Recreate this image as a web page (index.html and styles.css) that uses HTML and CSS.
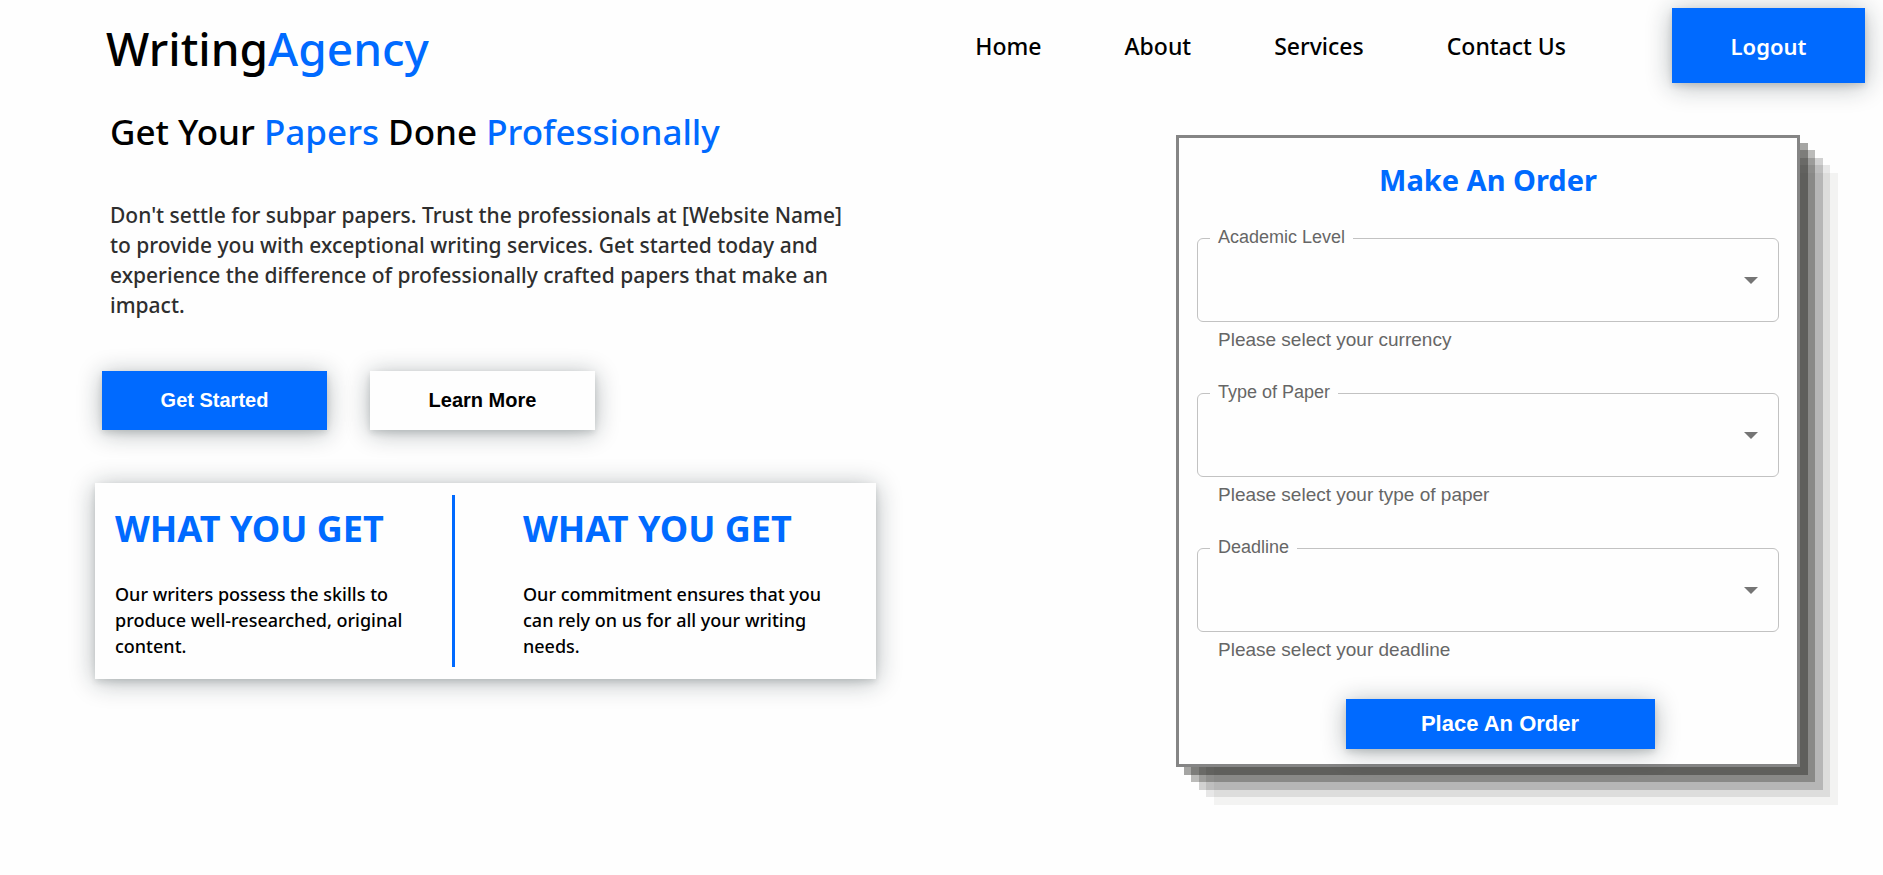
FILE: index.html
```html
<!DOCTYPE html>
<html lang="en">
<head>
<meta charset="utf-8">
<title>WritingAgency</title>
<link rel="stylesheet" href="styles.css">
</head>
<body>
<header class="header">
  <div class="logo">Writing<span class="accent">Agency</span></div>
  <nav class="nav">
    <a href="#home">Home</a>
    <a href="#about">About</a>
    <a href="#services">Services</a>
    <a href="#contact">Contact Us</a>
  </nav>
  <button class="btn btn-logout" type="button">Logout</button>
</header>
<main class="main">
  <section class="hero">
    <h1 class="hero-title">Get Your <span class="accent">Papers</span> Done <span class="accent">Professionally</span></h1>
    <p class="hero-text">Don't settle for subpar papers. Trust the professionals at [Website Name] to provide you with exceptional writing services. Get started today and experience the difference of professionally crafted papers that make an impact.</p>
    <div class="actions">
      <button class="btn btn-action" type="button">Get Started</button>
      <button class="btn btn-action btn-light" type="button">Learn More</button>
    </div>
    <div class="benefits">
      <article class="benefit">
        <h2>WHAT YOU GET</h2>
        <p>Our writers possess the skills to produce well-researched, original content.</p>
      </article>
      <article class="benefit">
        <h2>WHAT YOU GET</h2>
        <p>Our commitment ensures that you can rely on us for all your writing needs.</p>
      </article>
    </div>
  </section>
  <form class="order">
    <h2 class="order-title">Make An Order</h2>
    <div class="field">
      <label for="level">Academic Level</label>
      <div class="control">
        <select id="level" aria-describedby="level-help"><option></option></select>
        <svg viewBox="0 0 14 7" aria-hidden="true"><path d="M0 0h14L7 7z"/></svg>
      </div>
      <p id="level-help">Please select your currency</p>
    </div>
    <div class="field">
      <label for="type">Type of Paper</label>
      <div class="control">
        <select id="type" aria-describedby="type-help"><option></option></select>
        <svg viewBox="0 0 14 7" aria-hidden="true"><path d="M0 0h14L7 7z"/></svg>
      </div>
      <p id="type-help">Please select your type of paper</p>
    </div>
    <div class="field">
      <label for="deadline">Deadline</label>
      <div class="control">
        <select id="deadline" aria-describedby="deadline-help"><option></option></select>
        <svg viewBox="0 0 14 7" aria-hidden="true"><path d="M0 0h14L7 7z"/></svg>
      </div>
      <p id="deadline-help">Please select your deadline</p>
    </div>
    <div class="submit">
      <button class="btn btn-order" type="button">Place An Order</button>
    </div>
  </form>
</main>
</body>
</html>
```
FILE: styles.css
```css
:root {
  --blue: #006aff;
  --raised: 0 3px 6px rgba(14, 30, 37, 0.12), 0 3px 24px rgba(14, 30, 37, 0.32);
}

* {
  box-sizing: border-box;
}

body {
  margin: 0;
  background: #fefefe;
  color: #000;
  font-family: "Noto Sans", "Open Sans", sans-serif;
  font-weight: 500;
}

h1,
h2,
p {
  margin: 0;
}

.accent {
  color: var(--blue);
}

.btn {
  border: 0;
  background: var(--blue);
  color: #fff;
  box-shadow: var(--raised);
  font-family: "Liberation Sans", Arial, sans-serif;
  font-weight: 700;
  cursor: pointer;
}

.header {
  display: flex;
  align-items: center;
  padding: 8px 18px 0 106px;
}

.logo {
  margin-right: auto;
  padding-top: 5px;
  font-size: 46px;
  line-height: 70px;
}

.nav {
  display: flex;
  gap: 83px;
  margin-right: 106px;
}

.nav a {
  color: #000;
  font-size: 23px;
  text-decoration: none;
}

.btn-logout {
  width: 193px;
  height: 75px;
  font-family: "Noto Sans", "Open Sans", sans-serif;
  font-size: 22px;
  font-weight: 600;
}

.main {
  display: flex;
  justify-content: space-between;
  align-items: flex-start;
  gap: 48px;
  padding: 0 83px 48px 95px;
}

.hero {
  flex: 0 1 781px;
}

.hero-title {
  margin: 21px 0 0 15px;
  font-size: 35px;
  font-weight: 500;
  line-height: 56px;
}

.hero-text {
  margin: 40px 24px 0 15px;
  color: #2e2e2e;
  font-size: 21px;
  line-height: 30px;
}

.actions {
  display: flex;
  gap: 43px;
  margin: 51px 0 53px 7px;
}

.btn-action {
  width: 225px;
  height: 59px;
  font-size: 20px;
}

.btn-light {
  background: #fefefe;
  color: #000;
}

.benefits {
  display: grid;
  grid-template-columns: 360px 1fr;
  padding: 12px 0;
  background: #fefefe;
  box-shadow: var(--raised);
}

.benefit {
  padding: 10px 32px 8px 20px;
}

.benefit:first-child {
  border-right: 3px solid var(--blue);
}

.benefit + .benefit {
  padding-left: 68px;
}

.benefit h2 {
  color: var(--blue);
  font-size: 36px;
  font-weight: 700;
  line-height: 48px;
}

.benefit p {
  margin-top: 28px;
  font-size: 18px;
  line-height: 26px;
}

.order {
  flex: 0 1 624px;
  margin-top: 52px;
  padding: 18px 18px 15px;
  border: 3px solid #858585;
  background: #fefefe;
  box-shadow:
    8px 8px rgba(32, 32, 28, 0.4),
    15px 15px rgba(32, 32, 28, 0.3),
    23px 23px rgba(32, 32, 28, 0.2),
    30px 30px rgba(32, 32, 28, 0.1),
    38px 38px rgba(32, 32, 28, 0.05);
}

.order-title {
  margin-bottom: 34px;
  color: var(--blue);
  font-size: 29px;
  font-weight: 700;
  line-height: 48px;
  text-align: center;
}

.field {
  position: relative;
  color: #666;
  font-family: "Liberation Sans", Arial, sans-serif;
  font-weight: 400;
}

.field + .field {
  margin-top: 39px;
}

.field label {
  position: absolute;
  top: -12px;
  left: 13px;
  padding: 0 8px;
  background: #fefefe;
  font-size: 18px;
  line-height: 22px;
}

.control {
  display: grid;
  align-items: center;
}

.control select,
.control svg {
  grid-area: 1 / 1;
}

.control select {
  width: 100%;
  height: 84px;
  border: 1px solid #c2c2c2;
  border-radius: 6px;
  padding: 0 48px 0 20px;
  background: transparent;
  font-size: 24px;
  appearance: none;
}

.control svg {
  justify-self: end;
  width: 14px;
  height: 7px;
  margin-right: 21px;
  fill: #757575;
  pointer-events: none;
}

.field p {
  margin: 4px 21px 0;
  font-size: 19px;
  line-height: 28px;
}

.submit {
  display: flex;
  justify-content: center;
  margin-top: 35px;
  padding-left: 24px;
}

.btn-order {
  width: 309px;
  height: 50px;
  font-size: 22px;
}
```
